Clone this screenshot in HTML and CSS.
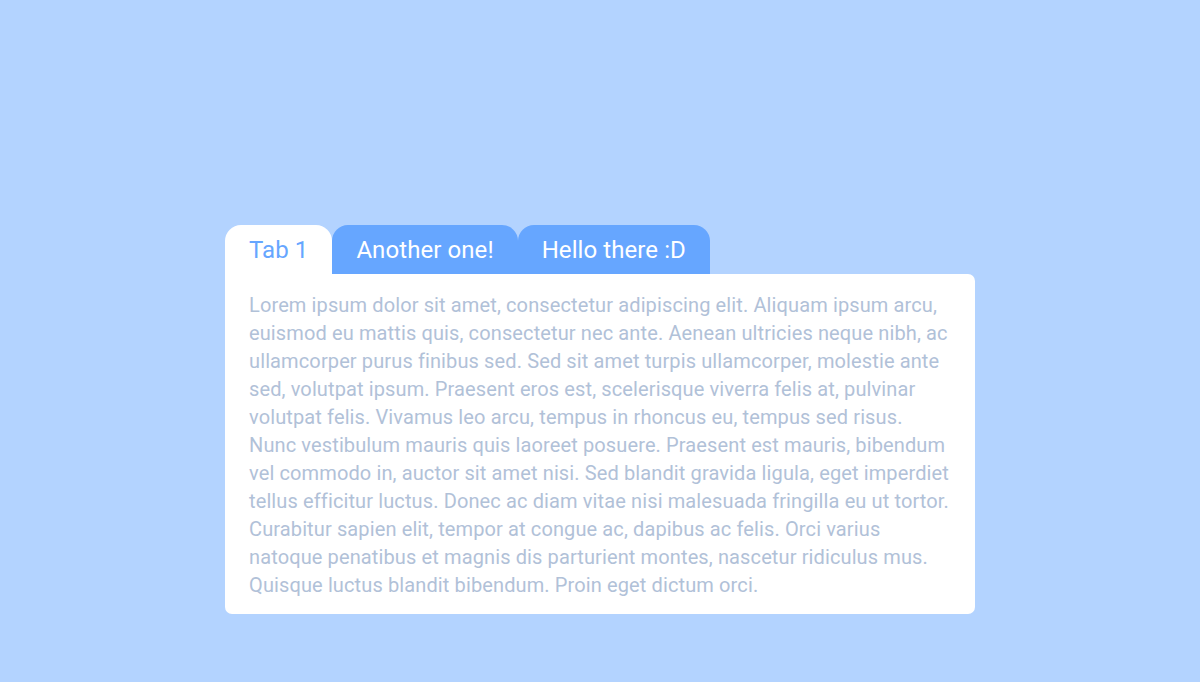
FILE: index.html
```
<!DOCTYPE html>
<html lang="en">
<head>
    <meta charset="UTF-8">
    <meta name="viewport" content="width=device-width, initial-scale=1.0">
    <title>Tabs</title>
    <link rel="stylesheet" href="styles.css">
</head>
<body>

    <div class="tabs">
        <div class="tab-list">
            <div class="tab active">Tab 1</div>
            <div class="tab">Another one!</div>
            <div class="tab">Hello there :D</div>
        </div>
        <div class="panel">
            Lorem ipsum dolor sit amet, consectetur adipiscing elit. Aliquam ipsum arcu, euismod eu mattis quis, consectetur nec ante. Aenean ultricies neque nibh, ac ullamcorper purus finibus sed. Sed sit amet turpis ullamcorper, molestie ante sed, volutpat ipsum. Praesent eros est, scelerisque viverra felis at, pulvinar volutpat felis. Vivamus leo arcu, tempus in rhoncus eu, tempus sed risus. Nunc vestibulum mauris quis laoreet posuere. Praesent est mauris, bibendum vel commodo in, auctor sit amet nisi. Sed blandit gravida ligula, eget imperdiet tellus efficitur luctus. Donec ac diam vitae nisi malesuada fringilla eu ut tortor. Curabitur sapien elit, tempor at congue ac, dapibus ac felis. Orci varius natoque penatibus et magnis dis parturient montes, nascetur ridiculus mus. Quisque luctus blandit bibendum. Proin eget dictum orci.
        </div>
    </div>

</body>
</html>
```

FILE: styles.css
```
body, html {
    width: 100%;
    height: 100%;
    margin: 0;
}
body{
    background: #b3d3ff;
    font-family: Roboto, "Liberation Sans", sans-serif;
    display: flex;
    justify-content: center;
    align-items: flex-start;
}
.tabs{
    width: 750px;
    margin-top: 225px;
}
.tab-list{
    display: flex;
}
.tab{
    height: 49px;
    line-height: 51px;
    padding: 0 24px;
    font-size: 24px;
    letter-spacing: 0.08px;
    color: white;
    background: #66a6ff;
    border-radius: 16px 16px 0 0;
}
.tab.active{
    background: white;
    color: #66a6ff;
}
.panel{
    background: white;
    border-radius: 0 7px 7px 7px;
    padding: 17px 24px 15px 24px;
    font-size: 20px;
    line-height: 28px;
    letter-spacing: 0.12px;
    color: #b1c1d8;
}
```
